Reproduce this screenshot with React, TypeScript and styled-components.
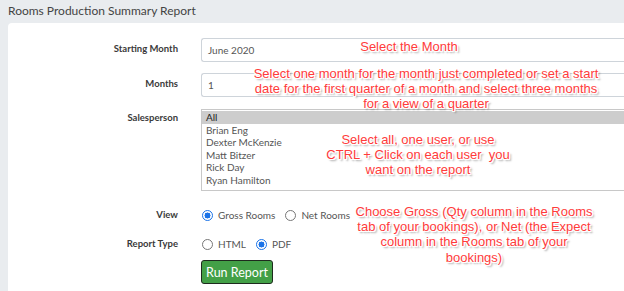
import React from "react";
import styled, { createGlobalStyle } from "styled-components";

const GlobalStyle = createGlobalStyle`
  html, body {
    margin: 0;
    padding: 0;
    background: #e9ecef;
    font-family: Lato, "Open Sans", sans-serif;
    overflow: hidden;
  }
`;

const Page = styled.div`
  width: 624px;
  height: 291px;
  padding-left: 8px;
  box-sizing: border-box;
  position: relative;
  overflow: hidden;
`;

const PageTitle = styled.h1`
  margin: 0;
  padding-top: 3px;
  height: 20px;
  font-family: Lato, "Open Sans", sans-serif;
  font-size: 12px;
  font-weight: 400;
  color: #444;
`;

const Card = styled.div`
  background: #fff;
  border-top-left-radius: 4px;
  height: 268px;
  padding-top: 15px;
  box-sizing: border-box;
`;

const Form = styled.div`
  display: grid;
  grid-template-columns: 170px 1fr;
  column-gap: 23px;
  align-items: start;
`;

const Label = styled.label<{ $top: number; $mt: number }>`
  margin-top: ${(p) => p.$mt}px;
  padding-top: ${(p) => p.$top}px;
  text-align: right;
  font-size: 9.5px;
  font-weight: 700;
  color: #3a3a3a;
`;

const Control = styled.div<{ $mt: number }>`
  margin-top: ${(p) => p.$mt}px;
`;

const TextInput = styled.div`
  height: 22px;
  margin-right: -10px;
  border: 1px solid #ced4da;
  border-right: none;
  border-radius: 3px 0 0 3px;
  padding-left: 6px;
  display: flex;
  align-items: center;
  font-size: 10px;
  color: #555;
`;

const ListBox = styled.ul`
  margin: 0 -10px 0 0;
  padding: 1px 0 4px;
  list-style: none;
  height: 82px;
  box-sizing: border-box;
  border: 1px solid #c8c8c8;
  border-right: none;
`;

const Option = styled.li<{ $selected?: boolean }>`
  height: 12.5px;
  line-height: 12.5px;
  padding-left: 4px;
  font-size: 10px;
  color: ${(p) => (p.$selected ? "#222" : "#555")};
  background: ${(p) => (p.$selected ? "#cdcdcd" : "transparent")};
`;

const RadioRow = styled.div`
  display: flex;
  align-items: center;
  height: 14px;
  padding-left: 1px;
`;

const RadioDot = styled.span<{ $checked?: boolean }>`
  width: 11px;
  height: 11px;
  border-radius: 50%;
  box-sizing: border-box;
  border: 1px solid ${(p) => (p.$checked ? "#1a73e8" : "#777")};
  background: ${(p) => (p.$checked ? "radial-gradient(circle, #1a73e8 0 2.8px, #fff 3.2px)" : "#fff")};
  margin-right: 5px;
`;

const RadioText = styled.span`
  font-size: 10px;
  color: #555;
  margin-right: 10px;
`;

const RunButton = styled.button`
  height: 24px;
  width: 72px;
  padding: 0;
  background: #43a047;
  border: 1px solid #1e2a1e;
  border-radius: 3px;
  color: #fff;
  font-family: Lato, "Open Sans", sans-serif;
  font-size: 12.5px;
`;

const Note = styled.div<{ $x: number; $y: number }>`
  position: absolute;
  left: ${(p) => p.$x}px;
  top: ${(p) => p.$y}px;
  transform: translateX(-50%);
  white-space: nowrap;
  text-align: center;
  font-family: "Liberation Sans", Arial, sans-serif;
  font-size: 13px;
  line-height: 15.2px;
  color: #ff3b3b;
  text-shadow: 1px 0 0 #fff, -1px 0 0 #fff, 0 1px 0 #fff, 0 -1px 0 #fff,
    1px 1px 0 #fff, -1px -1px 0 #fff, 1px -1px 0 #fff, -1px 1px 0 #fff,
    2px 2px 2px rgba(0, 0, 0, 0.4);
`;

const Radio = ({ label, checked }: { label: string; checked?: boolean }) => (
  <>
    <RadioDot $checked={checked} />
    <RadioText>{label}</RadioText>
  </>
);

const people = ["All", "Brian Eng", "Dexter McKenzie", "Matt Bitzer", "Rick Day", "Ryan Hamilton"];

export default function App() {
  return (
    <Page>
      <GlobalStyle />
      <PageTitle>Rooms Production Summary Report</PageTitle>
      <Card>
        <Form>
          <Label $mt={0} $top={5}>Starting Month</Label>
          <Control $mt={0}>
            <TextInput>June 2020</TextInput>
          </Control>
          <Label $mt={11} $top={5}>Months</Label>
          <Control $mt={11}>
            <TextInput>1</TextInput>
          </Control>
          <Label $mt={12} $top={3}>Salesperson</Label>
          <Control $mt={12}>
            <ListBox>
              {people.map((name, i) => (
                <Option key={name} $selected={i === 0}>
                  {name}
                </Option>
              ))}
            </ListBox>
          </Control>
          <Label $mt={17} $top={1}>View</Label>
          <Control $mt={17}>
            <RadioRow>
              <Radio label="Gross Rooms" checked />
              <Radio label="Net Rooms" />
            </RadioRow>
          </Control>
          <Label $mt={15} $top={1}>Report Type</Label>
          <Control $mt={15}>
            <RadioRow>
              <Radio label="HTML" />
              <Radio label="PDF" checked />
            </RadioRow>
          </Control>
          <div />
          <Control $mt={9}>
            <RunButton>Run Report</RunButton>
          </Control>
        </Form>
      </Card>
      <Note $x={409} $y={39}>Select the Month</Note>
      <Note $x={426} $y={66}>
        Select one month for the month just completed or set a start
        <br />
        date for the first quarter of a month and select three months
        <br />
        for a view of a quarter
      </Note>
      <Note $x={418} $y={132}>
        Select all, one user, or use
        <br />
        CTRL + Click on each user&nbsp; you
        <br />
        want on the report
      </Note>
      <Note $x={474} $y={204}>
        Choose Gross (Qty column in the Rooms
        <br />
        tab of your bookings), or Net (the Expect
        <br />
        column in the Rooms tab of your
        <br />
        bookings)
      </Note>
    </Page>
  );
}
